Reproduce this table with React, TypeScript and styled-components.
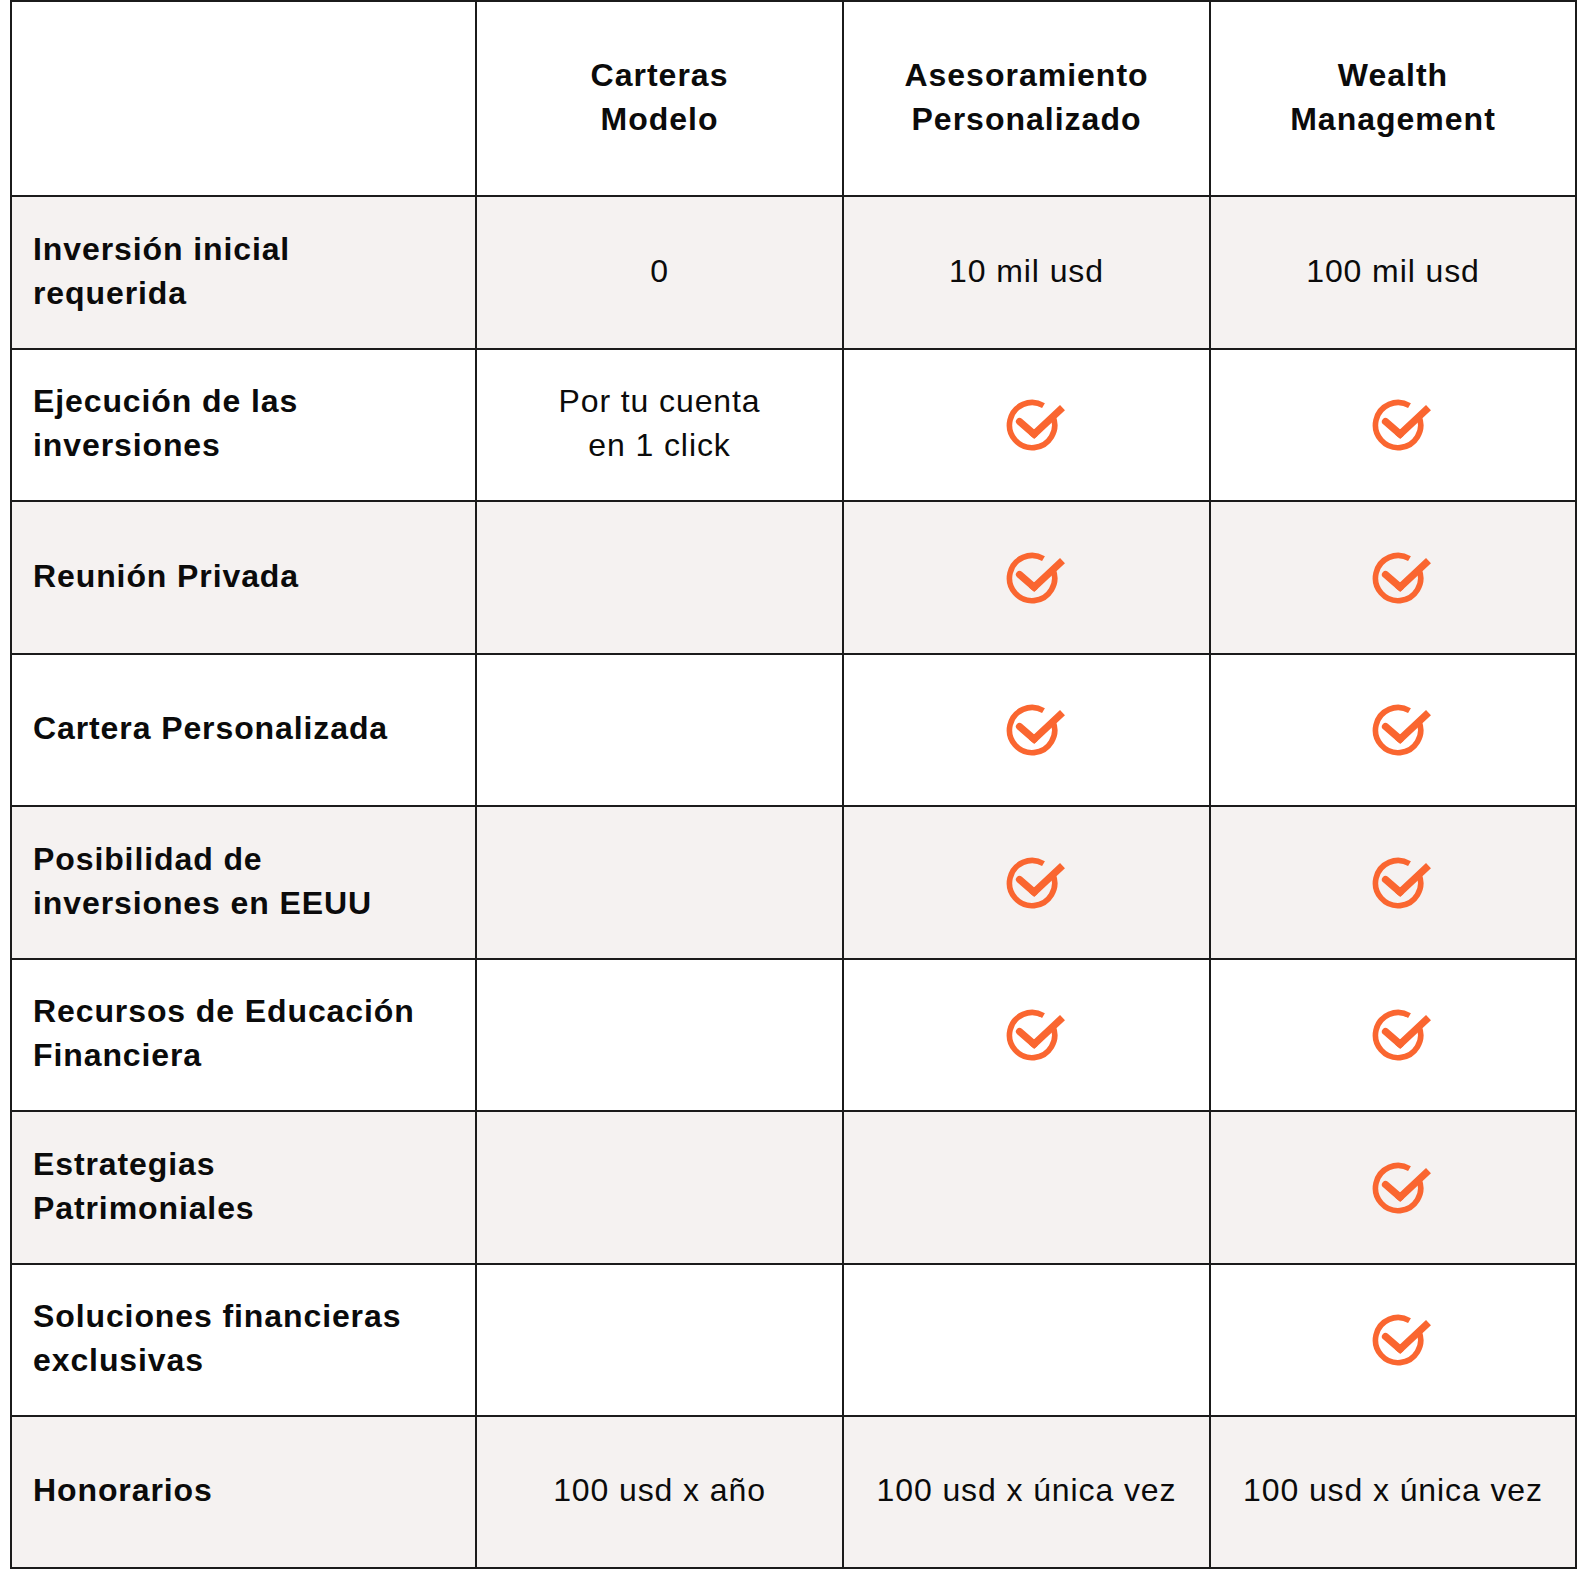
import React from 'react';
import styled, { createGlobalStyle } from 'styled-components';

const Global = createGlobalStyle`
  html, body { margin: 0; padding: 0; background: #fff; }
  body { font-family: "Liberation Sans", Arial, sans-serif; color: #0b0b0b; }
`;

const Page = styled.div`
  padding: 0 10px 0 10px;
`;

const Grid = styled.div`
  display: grid;
  grid-template-columns: 465px 367px 367px 366px;
  grid-template-rows: 195px 153px 152px 153px 152px 153px 152px 153px 152px 152px;
  width: max-content;
  border-top: 2px solid #1b1b1b;
  border-left: 2px solid #1b1b1b;
`;

const Cell = styled.div<{ $shaded?: boolean }>`
  box-sizing: border-box;
  border-right: 2px solid #1b1b1b;
  border-bottom: 2px solid #1b1b1b;
  background: ${(p) => (p.$shaded ? '#f5f2f1' : '#fff')};
  display: flex;
  align-items: center;
  font-size: 32px;
  line-height: 44px;
`;

const HeadCell = styled(Cell)`
  justify-content: center;
  text-align: center;
  font-weight: 700;
  letter-spacing: 1px;
`;

const LabelCell = styled(Cell)`
  padding-left: 21px;
  font-weight: 700;
  letter-spacing: 0.9px;
  white-space: nowrap;
`;

const ValueCell = styled(Cell)`
  justify-content: center;
  text-align: center;
  font-weight: 400;
  letter-spacing: 0.9px;
  white-space: nowrap;
`;

const Text = styled.div`
  margin-bottom: 4px;
`;

const CheckIcon = styled.svg`
  width: 64px;
  height: 54px;
  margin-left: 22px;
  flex: none;
`;

function Check() {
  return (
    <CheckIcon viewBox="0 0 64 54" fill="none">
      <path
        d="M 46.9 18.3 A 22.6 22.6 0 1 1 37.5 7.6"
        stroke="#fa6630"
        strokeWidth="5.6"
        strokeLinecap="butt"
      />
      <path
        d="M 13.5 23.5 L 28.2 36.2"
        stroke="#fa6630"
        strokeWidth="7.2"
        strokeLinecap="round"
      />
      <path
        d="M 25.6 33.8 L 28.2 36.2 L 56.5 9.6"
        stroke="#fa6630"
        strokeWidth="7.2"
        strokeLinecap="butt"
        strokeLinejoin="miter"
      />
    </CheckIcon>
  );
}

type Value = string | string[] | boolean | null;

interface Row {
  label: string[];
  values: [Value, Value, Value];
}

const headers = [
  ['Carteras', 'Modelo'],
  ['Asesoramiento', 'Personalizado'],
  ['Wealth', 'Management'],
];

const rows: Row[] = [
  { label: ['Inversión inicial', 'requerida'], values: ['0', '10 mil usd', '100 mil usd'] },
  { label: ['Ejecución de las', 'inversiones'], values: [['Por tu cuenta', 'en 1 click'], true, true] },
  { label: ['Reunión Privada'], values: [null, true, true] },
  { label: ['Cartera Personalizada'], values: [null, true, true] },
  { label: ['Posibilidad de', 'inversiones en EEUU'], values: [null, true, true] },
  { label: ['Recursos de Educación', 'Financiera'], values: [null, true, true] },
  { label: ['Estrategias', 'Patrimoniales'], values: [null, null, true] },
  { label: ['Soluciones financieras', 'exclusivas'], values: [null, null, true] },
  { label: ['Honorarios'], values: ['100 usd x año', '100 usd x única vez', '100 usd x única vez'] },
];

function Lines({ lines }: { lines: string[] }) {
  return (
    <Text>
      {lines.map((l, i) => (
        <React.Fragment key={i}>
          {i > 0 && <br />}
          {l}
        </React.Fragment>
      ))}
    </Text>
  );
}

function renderValue(v: Value) {
  if (v === true) return <Check />;
  if (!v) return null;
  return <Lines lines={Array.isArray(v) ? v : [v]} />;
}

export default function App() {
  return (
    <Page>
      <Global />
      <Grid>
        <HeadCell />
        {headers.map((h, i) => (
          <HeadCell key={i}>
            <Lines lines={h} />
          </HeadCell>
        ))}
        {rows.map((row, r) => {
          const shaded = r % 2 === 0;
          return (
            <React.Fragment key={r}>
              <LabelCell $shaded={shaded}>
                <Lines lines={row.label} />
              </LabelCell>
              {row.values.map((v, c) => (
                <ValueCell key={c} $shaded={shaded}>
                  {renderValue(v)}
                </ValueCell>
              ))}
            </React.Fragment>
          );
        })}
      </Grid>
    </Page>
  );
}
